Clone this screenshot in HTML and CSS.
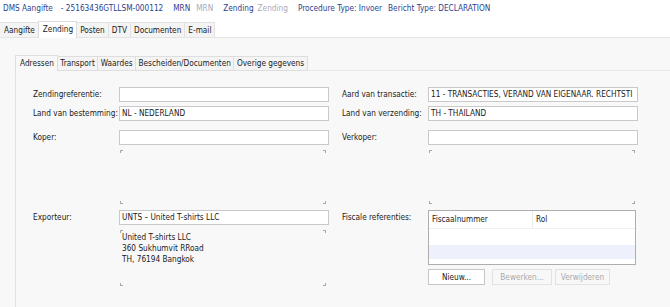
FILE: index.html
```html
<!DOCTYPE html>
<html>
<head>
<meta charset="utf-8">
<link rel="stylesheet" href="styles.css">
</head>
<body>
<div class="header">
  <span class="h-item">DMS Aangifte</span>
  <span class="h-item g1">- 25163436GTLLSM-000112</span>
  <span class="h-item g2">MRN</span>
  <span class="h-item muted g3">MRN</span>
  <span class="h-item g2">Zending</span>
  <span class="h-item muted g4">Zending</span>
  <span class="h-item g2">Procedure Type: Invoer</span>
  <span class="h-item g3">Bericht Type: DECLARATION</span>
</div>
<div class="tabs">
  <div class="tab first">Aangifte</div>
  <div class="tab active">Zending</div>
  <div class="tab">Posten</div>
  <div class="tab">DTV</div>
  <div class="tab">Documenten</div>
  <div class="tab">E-mail</div>
</div>
<div class="panel">
  <div class="subtabs">
    <div class="stab active">Adressen</div>
    <div class="stab">Transport</div>
    <div class="stab">Waardes</div>
    <div class="stab">Bescheiden/Documenten</div>
    <div class="stab">Overige gegevens</div>
    <div class="stab-fill"></div>
  </div>
  <div class="subpanel">
    <div class="col">
      <div class="row"><span class="label">Zendingreferentie:</span><div class="input"></div></div>
      <div class="row r2"><span class="label">Land van bestemming:</span><div class="input">NL - NEDERLAND</div></div>
      <div class="row r3"><span class="label">Koper:</span><div class="input"></div></div>
      <div class="row r4"><span class="label"></span><div class="cbox"></div></div>
      <div class="row r5"><span class="label">Exporteur:</span><div class="input">UNTS – United T-shirts LLC</div></div>
      <div class="row r6"><span class="label"></span><div class="cbox addr">United T-shirts LLC<br>360 Sukhumvit RRoad<br>TH, 76194 Bangkok</div></div>
    </div>
    <div class="col">
      <div class="row"><span class="label">Aard van transactie:</span><div class="input">11 - TRANSACTIES, VERAND VAN EIGENAAR. RECHTSTI</div></div>
      <div class="row r2"><span class="label">Land van verzending:</span><div class="input">TH - THAILAND</div></div>
      <div class="row r3"><span class="label">Verkoper:</span><div class="input"></div></div>
      <div class="row r4"><span class="label"></span><div class="cbox"></div></div>
      <div class="row r5"><span class="label">Fiscale referenties:</span>
        <div class="fisc">
          <div class="table">
            <div class="thead"><div class="th c1">Fiscaalnummer</div><div class="th">Rol</div></div>
            <div class="trow"></div>
            <div class="trow sel"></div>
          </div>
          <div class="buttons">
            <div class="btn">Nieuw...</div>
            <div class="btn dis b2">Bewerken...</div>
            <div class="btn dis b3">Verwijderen</div>
          </div>
        </div>
      </div>
    </div>
  </div>
</div>
</body>
</html>
```
FILE: styles.css
```css
html, body { margin: 0; padding: 0; }
body {
  width: 670px;
  height: 307px;
  overflow: hidden;
  background: #ffffff;
  font-family: "DejaVu Sans Condensed", "DejaVu Sans", sans-serif;
  font-stretch: condensed;
  font-size: 8.2px;
  color: #1a1a1a;
}
.header {
  display: flex;
  height: 21px;
  box-sizing: border-box;
  padding: 3px 0 0 3px;
  line-height: 11px;
  color: #2c3f8f;
  white-space: nowrap;
}
.g1 { margin-left: 8px; }
.g2 { margin-left: 10px; }
.g3 { margin-left: 6px; }
.g4 { margin-left: 4px; }
.muted { color: #a9abb8; }

.tabs {
  display: flex;
  align-items: flex-end;
  height: 16px;
  padding-left: 0;
  border-bottom: 1px solid #e4e4e4;
}
.tab {
  height: 14px;
  line-height: 14px;
  padding: 0 3px;
  background: #f4f4f4;
  border: 1px solid #e2e2e2;
  border-bottom: none;
  margin-right: -1px;
  color: #1a1a1a;
}
.tab.first {
  padding-left: 3px;
  border-left-color: transparent;
}
.tab.active {
  height: 16px;
  line-height: 14px;
  background: #ffffff;
  margin-bottom: -1px;
  padding: 0 3px 0 4px;
  border-color: #dcdcdc;
  position: relative;
}
.panel {
  background: #f8f8f8;
  height: 270px;
  box-sizing: border-box;
  padding: 18px 0 0 15px;
}
.subtabs {
  display: flex;
  align-items: flex-end;
  height: 15px;
}
.stab {
  height: 13px;
  line-height: 13px;
  padding: 0 2.5px;
  background: #f4f4f4;
  border: 1px solid #dedede;
  margin-right: -1px;
}
.stab.active {
  height: 15px;
  line-height: 14px;
  background: #f8f8f8;
  border-bottom: none;
  padding: 0 3px 0 4px;
}
.stab-fill {
  flex: 1;
  border-bottom: 1px solid #e8e8e8;
}
.subpanel {
  border-left: 1px solid #e2e2e2;
  display: flex;
  padding: 16px 0 0 17px;
  height: 237px;
  box-sizing: border-box;
}
.col {
  display: flex;
  flex-direction: column;
  width: 309px;
}
.col + .col { width: 310px; }
.row {
  display: flex;
  align-items: flex-start;
}
.label {
  width: 86px;
  flex: none;
  line-height: 15px;
  white-space: nowrap;
}
.r2 { margin-top: 4px; }
.r3 { margin-top: 9px; }
.r4 { margin-top: 5px; }
.r5 { margin-top: 6px; }
.r6 { margin-top: 5px; }
.input {
  width: 204px;
  height: 13px;
  line-height: 13px;
  padding: 0 2px;
  background: #ffffff;
  border: 1px solid #c9c9c9;
  white-space: nowrap;
  overflow: hidden;
}
.cbox {
  margin-left: 1px;
  width: 206px;
  height: 54px;
  box-sizing: border-box;
  background:
    linear-gradient(#a8a8a8, #a8a8a8) left top / 1px 3px no-repeat,
    linear-gradient(#a8a8a8, #a8a8a8) left top / 3px 1px no-repeat,
    linear-gradient(#a8a8a8, #a8a8a8) right top / 1px 3px no-repeat,
    linear-gradient(#a8a8a8, #a8a8a8) right top / 3px 1px no-repeat,
    linear-gradient(#a8a8a8, #a8a8a8) left bottom / 1px 3px no-repeat,
    linear-gradient(#a8a8a8, #a8a8a8) left bottom / 3px 1px no-repeat,
    linear-gradient(#a8a8a8, #a8a8a8) right bottom / 1px 3px no-repeat,
    linear-gradient(#a8a8a8, #a8a8a8) right bottom / 3px 1px no-repeat;
}
.cbox.addr {
  height: 56px;
  padding: 2px 0 0 2px;
  line-height: 11px;
}
.fisc {
  display: flex;
  flex-direction: column;
}
.table {
  width: 206px;
  height: 53px;
  border: 1px solid #adadad;
  background: #ffffff;
}
.thead {
  display: flex;
  height: 17px;
  border-bottom: 1px solid #f0f0f0;
}
.th {
  line-height: 17px;
  padding-left: 3px;
}
.th.c1 {
  width: 100px;
  border-right: 1px solid #ececec;
}
.trow { height: 16px; }
.trow.sel { background: #eef0fb; height: 14px; }
.buttons {
  display: flex;
  margin-top: 4px;
}
.btn {
  height: 14px;
  line-height: 14px;
  text-align: center;
  border: 1px solid #c6c6c6;
  background: #ffffff;
  width: 55px;
}
.btn.dis {
  color: #a8a8a8;
  border-color: #e2e2e2;
  background: #f8f8f8;
}
.b2 { margin-left: 7px; width: 58px; }
.b3 { margin-left: 3px; width: 53px; }
```
